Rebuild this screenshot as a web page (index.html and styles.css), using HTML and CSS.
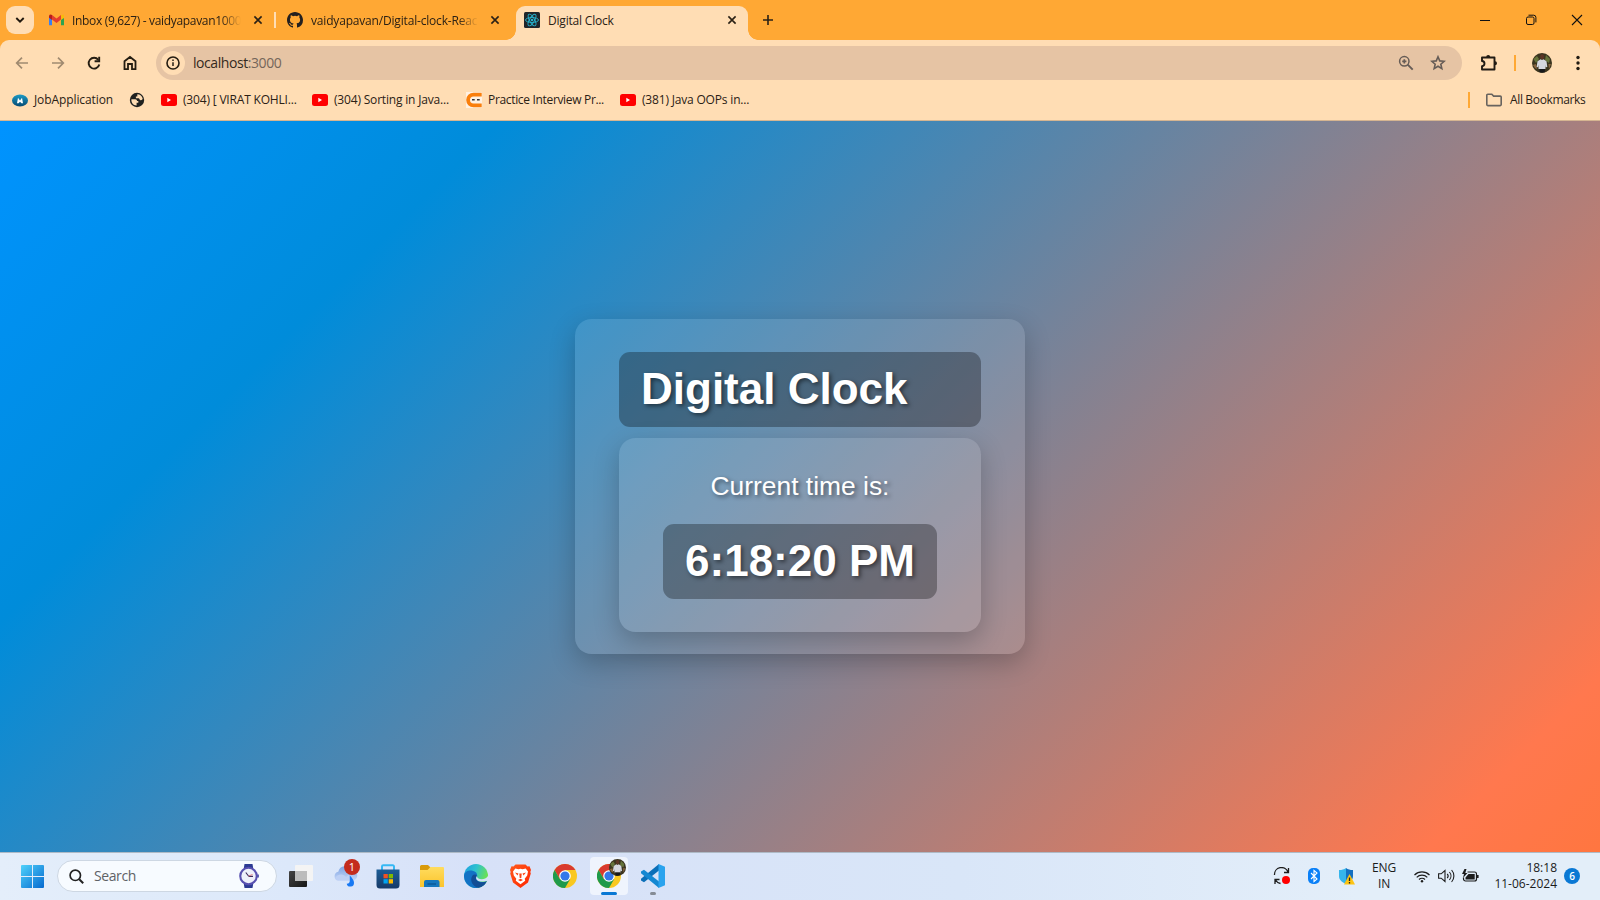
FILE: index.html
```html
<!DOCTYPE html>
<html lang="en">
<head>
<meta charset="utf-8">
<title>Digital Clock</title>
<link rel="stylesheet" href="styles.css">
</head>
<body>
<svg class="defs" width="0" height="0">
  <defs>
    <linearGradient id="win" x1="0" y1="0" x2="1" y2="1"><stop offset="0" stop-color="#4fd2fb"/><stop offset="1" stop-color="#0669cf"/></linearGradient>
    <linearGradient id="blu" x1="0" y1="0" x2="0" y2="1"><stop offset="0" stop-color="#1b5d97"/><stop offset="1" stop-color="#173a68"/></linearGradient>
    <linearGradient id="fold" x1="0" y1="0" x2="0" y2="1"><stop offset="0" stop-color="#ffdc5e"/><stop offset="1" stop-color="#fbc42c"/></linearGradient>
    <linearGradient id="edg" x1="0" y1="0" x2="1" y2="0.4"><stop offset="0" stop-color="#1b9de2"/><stop offset=".5" stop-color="#2fc2cf"/><stop offset="1" stop-color="#6be251"/></linearGradient>
    <linearGradient id="brv" x1="0" y1="0" x2="1" y2="1"><stop offset="0" stop-color="#ff5a1c"/><stop offset="1" stop-color="#ff2500"/></linearGradient>
    <linearGradient id="cld" x1="0" y1="0" x2="0" y2="1"><stop offset="0" stop-color="#7ea4e4"/><stop offset="1" stop-color="#c3d5f6"/></linearGradient>
    <linearGradient id="tv" x1="0" y1="0" x2="1" y2="1"><stop offset="0" stop-color="#444"/><stop offset="1" stop-color="#161616"/></linearGradient>
    <linearGradient id="job" x1="0" y1="0" x2="0" y2="1"><stop offset="0" stop-color="#1c9bc6"/><stop offset="1" stop-color="#064a72"/></linearGradient>
    <symbol id="yt" viewBox="0 0 16 12"><rect width="16" height="12" rx="2.500" fill="#f00"/><path d="M6.300 3.800v4.400L10 6z" fill="#fff"/></symbol>
    <symbol id="x" viewBox="0 0 10 10"><path d="M1.400 1.400l7.200 7.200M8.600 1.400L1.400 8.600" stroke="#2b2115" stroke-width="1.600"/></symbol>
    <symbol id="chrome" viewBox="0 0 24 24">
      <circle cx="12" cy="12" r="12" fill="#f9c820"/>
      <path d="M1.600 6A12 12 0 0 1 22.400 6H12L6.800 15z" fill="#d93a2f"/>
      <path d="M1.600 6A12 12 0 0 0 12 24L17.200 15H6.800z" fill="#1f9a4b"/>
      <circle cx="12" cy="12" r="5.800" fill="#fff"/><circle cx="12" cy="12" r="4.600" fill="#3478ea"/>
    </symbol>
    <symbol id="person" viewBox="0 0 20 20">
      <circle cx="10" cy="10" r="10" fill="#3c351f"/>
      <path d="M1.500 6l3.500-3 2 3-3 4zM14 2l4 4-1 4-4-3z" fill="#66743b"/><path d="M1 12l3-1 1 5-2-1zM16.500 11l2.500 0-2 5z" fill="#8a6640"/>
      <rect x="8.300" y="1.200" width="3.600" height="5" rx="1.700" fill="#5d3526"/>
      <path d="M5.500 8.300L8.600 6.300l1.400.8 1.500-.8 3 2 .8 5.700-1.600.3-.4-2.500.2 4.200h-7l.2-4.200-.6 2.500L4.600 14z" fill="#d5d7e0"/><path d="M7.300 16h5.700l-.3 3.400-5 .2z" fill="#17181b"/>
    </symbol>
  </defs>
</svg>

<header class="browser">
  <div class="tabstrip">
    <button class="tab-search"><svg width="10" height="8" viewBox="0 0 10 8"><path d="M1.300 2L5 5.600 8.700 2" fill="none" stroke="#20180e" stroke-width="1.900"/></svg></button>
    <div class="tab tab-mail">
      <svg class="fav" width="15" height="12" viewBox="0 0 15 12"><path d="M0 2v9.200h3V4z" fill="#3b7ff0"/><path d="M15 2v9.200h-3V4z" fill="#2ea44f"/><path d="M12 1l3-.3V4l-3 2z" fill="#f8b90b"/><path d="M3 6L0 3.800V1.600Q1 0 3 1z" fill="#b91e1a"/><path d="M3 1l4.500 3.500L12 1v4.600L7.500 9 3 5.600z" fill="#e53c2e"/></svg>
      <span class="tab-title mail-title">Inbox (9,627) - vaidyapavan1000</span>
      <svg class="close" width="10" height="10"><use href="#x"/></svg>
    </div>
    <i class="tab-sep"></i>
    <div class="tab tab-git">
      <svg class="fav" width="16" height="16" viewBox="0 0 16 16"><path fill="#24201f" d="M8 0C3.580 0 0 3.580 0 8c0 3.540 2.290 6.530 5.470 7.590.4.070.55-.17.55-.38 0-.19-.01-.82-.01-1.490-2.010.37-2.530-.49-2.690-.94-.09-.23-.48-.94-.82-1.130-.28-.15-.68-.52-.01-.53.63-.01 1.080.58 1.230.82.72 1.210 1.870.87 2.330.66.070-.52.28-.87.51-1.070-1.780-.2-3.640-.89-3.640-3.950 0-.87.31-1.590.82-2.150-.08-.2-.36-1.020.08-2.120 0 0 .67-.21 2.200.82a7.600 7.600 0 0 1 4 0c1.530-1.040 2.200-.82 2.200-.82.44 1.100.16 1.920.08 2.120.51.56.82 1.270.82 2.150 0 3.070-1.870 3.750-3.650 3.950.29.25.54.73.54 1.480 0 1.070-.01 1.930-.01 2.200 0 .21.15.46.55.38A8 8 0 0 0 16 8c0-4.420-3.580-8-8-8z"/></svg>
      <span class="tab-title git-title">vaidyapavan/Digital-clock-Reac</span>
      <svg class="close" width="10" height="10"><use href="#x"/></svg>
    </div>
    <div class="tab tab-active">
      <svg class="fav" width="16" height="16" viewBox="0 0 16 16"><rect width="16" height="16" rx="1.500" fill="#20262a"/><g fill="none" stroke="#27b3cd" stroke-width=".9"><ellipse cx="8" cy="8" rx="6.500" ry="2.500"/><ellipse cx="8" cy="8" rx="6.500" ry="2.500" transform="rotate(60 8 8)"/><ellipse cx="8" cy="8" rx="6.500" ry="2.500" transform="rotate(120 8 8)"/></g><circle cx="8" cy="8" r="1.300" fill="#27b3cd"/></svg>
      <span class="tab-title">Digital Clock</span>
      <svg class="close" width="10" height="10"><use href="#x"/></svg>
    </div>
    <svg class="newtab" width="12" height="12" viewBox="0 0 12 12"><path d="M6 1v10M1 6h10" stroke="#2b2115" stroke-width="1.600"/></svg>
    <div class="winctl">
      <svg width="12" height="12" viewBox="0 0 12 12"><path d="M1 6.500h10" stroke="#111"/></svg>
      <svg width="12" height="12" viewBox="0 0 12 12" fill="none" stroke="#111"><rect x="1.500" y="3" width="7.500" height="7.500" rx="1.500"/><path d="M3.500 1.200h5.200a2.200 2.200 0 0 1 2.200 2.200v5"/></svg>
      <svg width="12" height="12" viewBox="0 0 12 12"><path d="M1 1l10 10M11 1L1 11" stroke="#111" stroke-width="1.100"/></svg>
    </div>
  </div>

  <div class="chromebar">
  <div class="toolbar">
    <div class="nav">
      <svg width="16" height="16" viewBox="0 0 16 16" fill="none" stroke="#a08a70" stroke-width="1.700"><path d="M14 8H3M8 2.700L2.700 8 8 13.300"/></svg>
      <svg width="16" height="16" viewBox="0 0 16 16" fill="none" stroke="#a08a70" stroke-width="1.700"><path d="M2 8h11M8 2.700L13.300 8 8 13.300"/></svg>
      <svg width="16" height="16" viewBox="0 0 16 16" fill="none" stroke="#251d12" stroke-width="1.900"><path d="M13.300 9.500A5.400 5.400 0 1 1 12.300 4.800"/><path d="M13.200 1.700v4.600H8.600"/></svg>
      <svg width="16" height="16" viewBox="0 0 16 16" fill="none" stroke="#251d12" stroke-width="1.800"><path d="M2.500 14.200V6.300L8 2l5.500 4.300v7.900H10V9H6v5.200z"/></svg>
    </div>
    <div class="address">
      <span class="info"><svg width="16" height="16" viewBox="0 0 16 16"><circle cx="8" cy="8" r="6" fill="none" stroke="#251d12" stroke-width="1.600"/><path d="M8 7.200v3.900M8 4.600v1.500" stroke="#251d12" stroke-width="1.500"/></svg></span>
      <span class="url">localhost<b>:3000</b></span>
      <svg class="zoom" width="16" height="16" viewBox="0 0 16 16" fill="none" stroke="#665c56" stroke-width="1.500"><circle cx="6.300" cy="6.300" r="4.700"/><path d="M9.700 9.700l5 5" stroke-width="1.900"/><path d="M6.300 4.200v4.200M4.200 6.300h4.200" stroke-width="1.700"/></svg>
      <svg class="star" width="16" height="16" viewBox="0 0 16 16"><path d="M8 1.800l1.750 4.100 4.450.4-3.370 2.930 1 4.350L8 11.280l-3.830 2.300 1-4.350L1.800 6.300l4.450-.4z" fill="none" stroke="#665c56" stroke-width="1.600"/></svg>
    </div>
    <svg class="puzzle" width="18" height="18" viewBox="0 0 18 18"><path d="M2 3.500h12.500v12H2v-3.300c3.300-.3 3.300-4.900 0-5.200z" fill="none" stroke="#211b14" stroke-width="1.900" stroke-linejoin="round"/><path d="M6.200 3a2 2 0 0 1 4 0zM15 7.300a2 2 0 0 1 0 4z" fill="#211b14"/></svg>
    <i class="bar"></i>
    <svg class="avatar" width="20" height="20"><use href="#person"/></svg>
    <svg class="dots" width="4" height="16" viewBox="0 0 4 16" fill="#211b14"><circle cx="2" cy="2.500" r="1.700"/><circle cx="2" cy="8" r="1.700"/><circle cx="2" cy="13.500" r="1.700"/></svg>
  </div>
  <div class="bookmarks">
    <div class="bm bm-job"><svg width="16" height="16" viewBox="0 0 16 16"><ellipse cx="8" cy="8.500" rx="8" ry="6" fill="url(#job)"/><path d="M5 11.300L6 5.800l2 2.800 2-2.800 1 5.500H9.500L8 9.700 6.500 11.300z" fill="#fff"/></svg><span>JobApplication</span></div>
    <div class="bm bm-globe"><svg width="16" height="16" viewBox="0 0 16 16"><circle cx="8" cy="8" r="7.200" fill="#20211f"/><path d="M2.400 7.300h3.800c1.300 0 1.800.8 1.800 1.800h1.300v1.600H7.600v2.800C4.500 13.600 2.100 10.800 2.400 7.300zM8.300 2.300c2.700 0 5 1.900 5.400 4.500-.3 1.200-1.500 1.700-2.600 1.200C10.300 7.200 10.500 6.300 9.600 6.200H6.900V4.500h1.400z" fill="#ffddb4"/></svg></div>
    <div class="bm bm-yt1"><svg width="16" height="12"><use href="#yt"/></svg><span>(304) [ VIRAT KOHLI...</span></div>
    <div class="bm bm-yt2"><svg width="16" height="12"><use href="#yt"/></svg><span>(304) Sorting in Java...</span></div>
    <div class="bm bm-cn"><svg width="16" height="16" viewBox="0 0 16 16"><path d="M0 0h16v16H0z" fill="#fff1e2"/><path d="M15.700 2.600H7.500a5.400 5.400 0 0 0 0 10.800h8.200" fill="none" stroke="#fa7f0c" stroke-width="3.800"/><path d="M6 7.700h2.700M11 7.700h2.700" stroke="#333" stroke-width="1.500"/></svg><span>Practice Interview Pr...</span></div>
    <div class="bm bm-yt3"><svg width="16" height="12"><use href="#yt"/></svg><span>(381) Java OOPs in...</span></div>
    <i class="bar bar-bm"></i>
    <div class="bm bm-all"><svg width="18" height="16" viewBox="0 0 18 16"><path d="M1.800 3.200a1 1 0 0 1 1-1h4l1.800 1.900h6.600a1 1 0 0 1 1 1v7.500a1 1 0 0 1-1 1H2.800a1 1 0 0 1-1-1z" fill="none" stroke="#68635e" stroke-width="1.600"/></svg><span>All Bookmarks</span></div>
  </div>
  </div>
</header>

<main class="page">
  <section class="card">
    <h1 class="title">Digital Clock</h1>
    <div class="panel">
      <p class="label">Current time is:</p>
      <h2 class="time">6:18:20 PM</h2>
    </div>
  </section>
</main>

<footer class="taskbar">
  <svg class="start" width="23" height="23" viewBox="0 0 23 23" fill="url(#win)"><path d="M0 1a1 1 0 0 1 1-1h10v11H0zM12 0h10a1 1 0 0 1 1 1v10H12zM0 12h11v11H1a1 1 0 0 1-1-1zM12 12h11v10a1 1 0 0 1-1 1H12z"/></svg>
  <div class="search">
    <svg width="15" height="15" viewBox="0 0 15 15" fill="none" stroke="#222"><circle cx="6.300" cy="6.300" r="5.200" stroke-width="1.700"/><path d="M10.200 10.200l4 4" stroke-width="2"/></svg>
    <span>Search</span>
    <svg class="watch" width="22" height="26" viewBox="0 0 22 26"><path d="M6.500 1h8l1 6h-10zM6.500 25h8l1-6h-10z" fill="#2c3b93"/><rect x="19" y="11.500" width="2" height="3" fill="#5a64b4"/><circle cx="10.500" cy="13" r="9.300" fill="#5850b0"/><circle cx="10.500" cy="13" r="7.200" fill="#eef0fb"/><path d="M10.500 13L7.800 9.500M10.500 13.300H15" stroke="#3d2c60" stroke-width="1.200"/><path d="M10.500 13l4-1.500" stroke="#e06a6a" stroke-width=".8"/></svg>
  </div>
  <svg class="app a-tv" width="24" height="24" viewBox="0 0 24 24"><rect y="7" width="18" height="16" rx="1" fill="url(#tv)"/><rect x="6" y="1" width="18" height="16" rx="1" fill="#f4f4f4"/><path d="M6 7h12v10H6z" fill="#bcbcbc"/></svg>
  <div class="app a-cloud">
    <svg width="26" height="26" viewBox="0 0 26 26"><path d="M5 17.500a4.500 4.500 0 0 1 .3-8.800A7 7 0 0 1 18.500 7.500a5 5 0 0 1 1.500 10z" fill="url(#cld)"/><path d="M4.500 12.500c3-2 7-1 8.500 1.500l3-2.500 1 6H5c-3 0-3.500-3.500-.5-5z" fill="#bdd0f5"/><path d="M16.800 12.500c2.800 3 4.200 5 4.200 7.200a3.700 3.700 0 0 1-7.300 1c2.500 0 3.100-1.500 3.100-3.500z" fill="#1879f3"/></svg>
    <span class="count">1</span>
  </div>
  <svg class="app a-store" width="24" height="25" viewBox="0 0 24 25"><path d="M6 6.500V2.500A1.200 1.200 0 0 1 7.200 1.300h9.600A1.200 1.200 0 0 1 18 2.500v4" fill="none" stroke="#36b8f4" stroke-width="2"/><path d="M.5 5.500h23v15.500a3.500 3.500 0 0 1-3.500 3.500H4a3.500 3.500 0 0 1-3.500-3.500z" fill="url(#blu)"/><path fill="#f25022" d="M7.500 10h4.300v4.300H7.500z"/><path fill="#7fba00" d="M12.700 10H17v4.300h-4.300z"/><path fill="#00a4ef" d="M7.500 15.200h4.300v4.300H7.500z"/><path fill="#ffb900" d="M12.700 15.200H17v4.300h-4.300z"/></svg>
  <svg class="app a-files" width="24" height="22" viewBox="0 0 24 22"><path d="M0 1.500A1.500 1.500 0 0 1 1.500 0h6.500l3 3v4H0z" fill="#d99a09"/><path d="M0 5h7.500l3-3H23a1 1 0 0 1 1 1v19H0z" fill="url(#fold)"/><path d="M4 22v-5a2 2 0 0 1 2-2h11.500a2 2 0 0 1 2 2v5z" fill="#1576bd"/><path d="M7.500 19h8.500" stroke="#0c5c9c" stroke-width="1.600"/></svg>
  <svg class="app a-edge" width="24" height="24" viewBox="0 0 24 24"><circle cx="12" cy="12" r="12" fill="url(#edg)"/><path d="M0 11.500C1 7 5 6.200 8.500 6.700c4 .6 5.300 3.800 4.500 6-.8 1.500-.7 2.600.5 3.800 2.500 2 6.500 1.600 9.300.7A12 12 0 0 1 0 11.500z" fill="#1272c5"/><path d="M8.500 11.500c-3.500 5 .5 11.500 6 12.200A12 12 0 0 0 22.800 17.200c-3.500 1.800-8.300 1.600-10.300-1.400-1-1.500-.8-2.800.3-4.100-.8-1.500-3-1.700-4.300-.2z" fill="#124d95"/><path d="M12.600 12.200c-1.300 2.500.4 4.900 4 5.300 2.500.3 5.200-.2 7.400-1V12c-1.500 2.300-4 3.200-6.200 3.200-3 0-4.200-1-5.200-3z" fill="#d6e3f8"/></svg>
  <svg class="app a-brave" width="21" height="24" viewBox="0 0 21 24"><path d="M5.500.5h10l2 2 2-.2L21 6l-.7 2 .5 1.500L18 18.500 10.500 24 3 18.500.2 9.500.7 8 0 6l1.500-3.700 2 .2z" fill="url(#brv)"/><path d="M5.300 4.500l3.200.8 2-.5 2 .5 3.200-.8 2.300 3-.8 4-2.500 3.200.5 2-4.700 3.500-4.700-3.500.5-2-2.500-3.200-.8-4z" fill="#fff"/><path d="M5 8.500l3.500 1-1 2zM16 8.500l-3.500 1 1 2zM9.300 9.500h2.400l-.4 4.500h-1.600zM8 16l2.500-1.200L13 16l-2.500 1.200z" fill="#fb4414"/></svg>
  <svg class="app a-chrome" width="24" height="24"><use href="#chrome"/></svg>
  <div class="app active"><svg width="24" height="24"><use href="#chrome"/></svg><svg class="mini" width="17" height="17" viewBox="0 0 20 20"><use href="#person" width="20" height="20"/></svg><i class="run"></i></div>
  <div class="app code"><svg width="24" height="24" viewBox="0 0 24 24"><path d="M18 0v6.500L3 18.300 0 16.500v-1.700z" fill="#0b6fb8"/><path d="M18 24v-6.500L3 5.700 0 7.500v1.700z" fill="#1488d2"/><path d="M17.500 0L24 2.700v18.600L17.500 24z" fill="#2aa3ee"/></svg><i class="idle"></i></div>

  <div class="tray">
    <svg class="t-sync" width="18" height="18" viewBox="0 0 18 18" fill="none" stroke="#1d1d1d" stroke-width="1.300"><path d="M1.500 8A7 7 0 0 1 15 5M15.500 1v4.500H11M2 17v-4.500h4.500M2.500 13a7 7 0 0 0 5 3.500"/><circle cx="13" cy="13" r="4" fill="#f00" stroke="none"/></svg>
    <svg class="t-bt" width="12" height="16" viewBox="0 0 12 16"><rect width="12" height="16" rx="5" fill="#0a80f7"/><path d="M3 5l6 6-3 2.600V2.400L9 5l-6 6" fill="none" stroke="#fff" stroke-width="1.100"/></svg>
    <svg class="t-shield" width="16" height="17" viewBox="0 0 16 17"><path d="M7 0C5 1.500 3 2 0 2v6c0 4 3 6 7 8z" fill="#35b5ec"/><path d="M7 0c2 1.500 4 2 7 2v6c0 4-3 6-7 8z" fill="#1470c1"/><path d="M10.500 6L16 16.500H5z" fill="#fdc413"/><path d="M10.500 9.500v3.500M10.500 14v1.500" stroke="#222" stroke-width="1.300"/></svg>
    <div class="lang"><span>ENG</span><span>IN</span></div>
    <svg class="t-wifi" width="16" height="13" viewBox="0 0 16 13" fill="none" stroke="#1d1d1d" stroke-width="1.200"><path d="M.5 5a10.600 10.600 0 0 1 15 0M2.700 7.300a7.500 7.500 0 0 1 10.600 0M5 9.500a4.300 4.300 0 0 1 6 0"/><circle cx="8" cy="11.200" r="1.200" fill="#1d1d1d" stroke="none"/></svg>
    <svg class="t-vol" width="17" height="14" viewBox="0 0 17 14" fill="none" stroke="#1d1d1d" stroke-width="1.100"><path d="M.6 4.800v4.400h2.600L7 12.500v-11L3.200 4.800zM9.200 4.800a3.300 3.300 0 0 1 0 4.400M11.400 3a6 6 0 0 1 0 8M13.600 1a9 9 0 0 1 0 12"/></svg>
    <svg class="t-bat" width="17" height="14" viewBox="0 0 17 14"><path d="M5.500 3h7a2 2 0 0 1 2 2v5a2 2 0 0 1-2 2h-9a2 2 0 0 1-2-2V8.500" fill="none" stroke="#1d1d1d" stroke-width="1.200"/><path d="M3.500 10.500V8.500L6.500 5h6.200v5.500zM15 6h1.600v3H15z" fill="#1d1d1d"/><path d="M2.500 0L0 5h2l-1 4 4.500-5H3.300L4.500 0z" fill="#1d1d1d"/></svg>
    <div class="clock"><span>18:18</span><span>11-06-2024</span></div>
    <span class="notif">6</span>
  </div>
</footer>
</body>
</html>
```

FILE: styles.css
```css
* { box-sizing: border-box; }
body {
  margin: 0;
  width: 1600px;
  height: 900px;
  overflow: hidden;
  display: flex;
  flex-direction: column;
  font-family: "Open Sans", "Noto Sans", sans-serif;
  font-size: 12px;
  color: #2b2115;
}
svg { display: block; flex: none; }
.defs { position: absolute; }
button { border: 0; padding: 0; }

/* Browser chrome */
.browser { height: 121px; background: #ffa834; flex: none; }
.tabstrip { height: 40px; display: flex; align-items: center; padding-left: 6px; }
.tab-search {
  width: 28px; height: 28px; border-radius: 9px; background: #ffddb4;
  display: flex; align-items: center; justify-content: center;
}
.tab { display: flex; align-items: center; }
.tab-title { white-space: nowrap; letter-spacing: -0.33px; line-height: 18px; flex: 1; padding-top: 1px; }
.tab-mail { width: 227px; padding-left: 15px; }
.tab-mail .tab-title { margin-left: 8px; }
.tab-mail .close, .tab-git .close { margin-left: 12px; }
.mail-title, .git-title {
  -webkit-mask-image: linear-gradient(90deg, #000 88%, transparent);
  mask-image: linear-gradient(90deg, #000 88%, transparent);
}
.tab-title.git-title { letter-spacing: -0.18px; }
.tab-sep { width: 2px; height: 16px; background: #ffddb4; margin-left: 13px; }
.tab-git { width: 224px; padding-left: 11px; }
.tab-git .tab-title { margin-left: 8px; }
.tab-active {
  position: relative; width: 232px; height: 34px; margin: 6px 0 0 16px; padding: 0 11px 6px 8px;
  background: #ffddb4; border-radius: 9px 9px 0 0;
}
.tab-active::before, .tab-active::after {
  content: ""; position: absolute; bottom: 0; width: 10px; height: 10px;
}
.tab-active::before { left: -10px; background: radial-gradient(circle at 0 0, transparent 9.5px, #ffddb4 10px); }
.tab-active::after { right: -10px; background: radial-gradient(circle at 100% 0, transparent 9.5px, #ffddb4 10px); }
.tab-active .tab-title { margin-left: 8px; letter-spacing: -0.2px; }
.newtab { margin-left: 14px; }
.winctl { margin-left: auto; display: flex; gap: 34px; padding-right: 17px; }

.chromebar { height: 81px; background: #ffddb4; border-radius: 9px 9px 0 0; border-bottom: 1px solid #d5b591; }
.toolbar { height: 46px; display: flex; align-items: center; padding-left: 14px; }
.nav { display: flex; gap: 20px; width: 142px; }
.address {
  width: 1306px; height: 34px; border-radius: 17px; background: #e6c4a4;
  display: flex; align-items: center; padding: 0 16px 0 5px;
}
.info { width: 24px; height: 24px; border-radius: 50%; background: #ffddb4; display: flex; align-items: center; justify-content: center; }
.url { margin-left: 8px; padding-bottom: 1px; font-size: 14px; letter-spacing: -0.43px; color: #342a20; }
.url b { font-weight: 400; color: #75665a; }
.zoom { margin-left: auto; }
.star { margin-left: 16px; }
.puzzle { margin-left: 18px; }
.bar { width: 2px; height: 16px; background: #ffa834; margin-left: 16px; }
.avatar { margin-left: 16px; }
.dots { margin-left: 24px; }
.bookmarks { height: 28px; display: flex; align-items: center; padding: 0 14px 0 12px; }
.bm { display: flex; align-items: center; gap: 6px; white-space: nowrap; letter-spacing: -0.18px; }
.bm span { padding-bottom: 1px; }
.bm-job { width: 117px; letter-spacing: -0.1px; }
.bm-globe { width: 32px; }
.bm-yt1 { width: 151px; }
.bm-yt2 { width: 154px; }
.bm-cn { width: 154px; letter-spacing: -0.33px; }
.bm-yt3 { width: 130px; }
.bar-bm { margin-left: auto; }
.bm-all { width: 101px; margin-left: 15px; gap: 7px; letter-spacing: -0.35px; }

/* Page */
.page {
  height: 731px; flex: none; display: flex; align-items: center; justify-content: center;
  background: linear-gradient(135deg, #0093ff 0%, #008cda 21.5%, #ff784e 92.5%, #ff7640 100%);
  font-family: "Liberation Sans", Arial, sans-serif; color: #fff;
}
.card {
  width: 450px; height: 335px; padding: 33px 44px 22px; border-radius: 16.5px;
  background: rgba(255,255,255,.1); box-shadow: 0 9px 26px rgba(0,0,0,.22);
}
.title, .time {
  margin: 0; padding: 11px 22px; font-size: 44px; line-height: 52.8px; font-weight: 700;
  border-radius: 11px; background: rgba(0,0,0,.3); text-shadow: 2.2px 2.2px 4.4px rgba(0,0,0,.5);
  white-space: nowrap;
}
.panel {
  margin-top: 11px; padding: 33px 44px; height: 194px; border-radius: 16.5px; text-align: center;
  background: rgba(255,255,255,.1); box-shadow: 0 9px 26px rgba(0,0,0,.22);
}
.label { margin: 0 0 22px; font-size: 26.4px; line-height: 31px; text-shadow: 2.2px 2.2px 4.4px rgba(0,0,0,.5); }

/* Taskbar */
.taskbar {
  height: 48px; flex: none; display: flex; align-items: center; padding: 0 0 1px 21px;
  border-top: 1px solid #aebac6;
  background: linear-gradient(90deg, #e4eefa 0%, #dce8fa 18%, #d7e1f8 30%, #d9e6f8 60%, #e3eef9 85%, #e3eef9 100%);
}
.search {
  width: 220px; height: 32px; margin-left: 13px; padding: 0 16px 0 11px; border-radius: 16px;
  background: #f7fbff; border: 1px solid #cdd7e3; display: flex; align-items: center;
  font-size: 14px; letter-spacing: -0.4px; color: #5f6266;
}
.search span { margin-left: 10px; padding-bottom: 1px; }
.watch { margin-left: auto; }
.a-tv { margin-left: 12px; }
.a-cloud { position: relative; margin-left: 20px; }
.count {
  position: absolute; left: 11px; top: -4px; width: 16px; height: 16px; border-radius: 50%;
  background: #c42b1c; color: #fff; font-size: 11px; line-height: 16px; text-align: center;
}
.a-store { margin-left: 17px; }
.a-files { margin-left: 20px; }
.a-edge { margin-left: 20px; }
.a-brave { margin-left: 22px; }
.a-chrome { margin-left: 22px; }
.active {
  position: relative; width: 38px; height: 38px; margin-left: 13px; padding: 7px;
  border-radius: 4px; background: #eff4fd;
}
.mini { position: absolute; left: 19px; top: 2px; }
.run { position: absolute; left: 11px; bottom: 0; width: 16px; height: 3px; border-radius: 2px; background: #0a78d4; }
.code { position: relative; margin-left: 13px; }
.idle { position: absolute; left: 9px; bottom: -7px; width: 6px; height: 3px; border-radius: 2px; background: #858c96; }
.tray { margin-left: auto; display: flex; align-items: center; padding-right: 20px; color: #1b1b1b; }
.t-bt { margin-left: 17px; }
.t-shield { margin-left: 19px; }
.lang, .clock { display: flex; flex-direction: column; line-height: 16px; letter-spacing: -0.2px; }
.lang { width: 32px; margin-left: 13px; text-align: center; }
.t-wifi { margin-left: 14px; }
.t-vol { margin-left: 8px; }
.t-bat { margin-left: 7px; }
.clock { width: 70px; margin-left: 8px; text-align: right; letter-spacing: 0; }
.notif {
  width: 16px; height: 16px; border-radius: 50%; margin-left: 7px; background: #0a78d4;
  color: #fff; font-size: 10px; font-weight: 600; line-height: 16px; text-align: center;
}
```
